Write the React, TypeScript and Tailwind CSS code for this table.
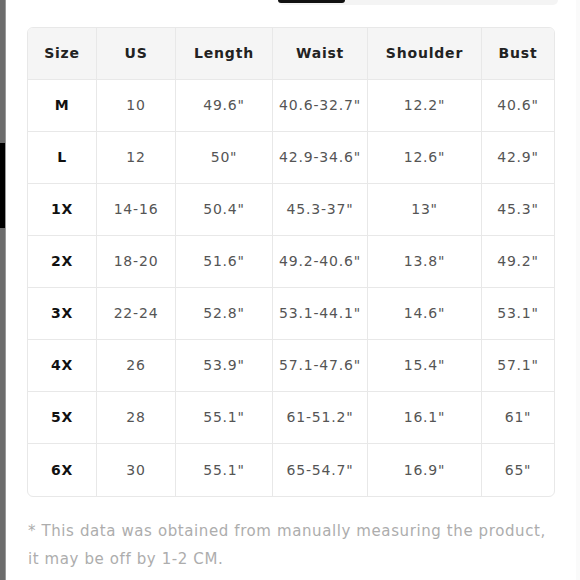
const headers = ["Size", "US", "Length", "Waist", "Shoulder", "Bust"];

const rows = [
  ["M", "10", "49.6\"", "40.6-32.7\"", "12.2\"", "40.6\""],
  ["L", "12", "50\"", "42.9-34.6\"", "12.6\"", "42.9\""],
  ["1X", "14-16", "50.4\"", "45.3-37\"", "13\"", "45.3\""],
  ["2X", "18-20", "51.6\"", "49.2-40.6\"", "13.8\"", "49.2\""],
  ["3X", "22-24", "52.8\"", "53.1-44.1\"", "14.6\"", "53.1\""],
  ["4X", "26", "53.9\"", "57.1-47.6\"", "15.4\"", "57.1\""],
  ["5X", "28", "55.1\"", "61-51.2\"", "16.1\"", "61\""],
  ["6X", "30", "55.1\"", "65-54.7\"", "16.9\"", "65\""],
];

const Cell = ({ children, col, last, className }: { children: string; col: number; last: boolean; className: string }) => (
  <div
    className={`flex h-[52px] items-center justify-center ${col < 5 ? "border-r" : ""} ${
      last ? "" : "border-b"
    } border-[#e8e8e8] ${className}`}
  >
    {children}
  </div>
);

export default function App() {
  return (
    <div className="flex h-[580px] w-[580px] overflow-hidden bg-white font-['DejaVu_Sans',sans-serif]">
      <div className="flex w-[6px] flex-col border-r border-[#9a9a9a] bg-[#6c6c6c]">
        <div className="h-[143px]" />
        <div className="h-[85px] bg-black" />
      </div>

      <div className="flex flex-1 flex-col">
        <div className="ml-[272px] mr-[18px] flex h-[5px] rounded-b-md bg-[#f4f4f4]">
          <div className="h-[3px] w-[67px] rounded-b-sm bg-[#111]" />
        </div>

        <div className="ml-[21px] mt-[22px] w-[528px] overflow-hidden rounded-md border border-[#e8e8e8]">
          <div className="grid grid-cols-[69px_79px_97px_95px_114px_72px] tracking-[0.05em]">
            {headers.map((h, i) => (
              <Cell key={h} col={i} last={false} className="h-[51px] bg-[#f5f5f5] text-[14px] font-bold text-[#222]">
                {h}
              </Cell>
            ))}
            {rows.map((row, r) =>
              row.map((value, i) => (
                <Cell
                  key={`${r}-${i}`}
                  col={i}
                  last={r === rows.length - 1}
                  className={
                    i === 0
                      ? "text-[14px] font-bold text-[#111]"
                      : "text-[14px] text-[#555]"
                  }
                >
                  {value}
                </Cell>
              ))
            )}
          </div>
        </div>

        <p className="ml-[22px] mt-[20px] whitespace-nowrap text-[15px] leading-[28px] tracking-[0.04em] text-[#adadad]">
          * This data was obtained from manually measuring the product,
          <br />
          it may be off by 1-2 CM.
        </p>
      </div>

      <div className="w-[4px] bg-[#fafafa]" />
    </div>
  );
}
